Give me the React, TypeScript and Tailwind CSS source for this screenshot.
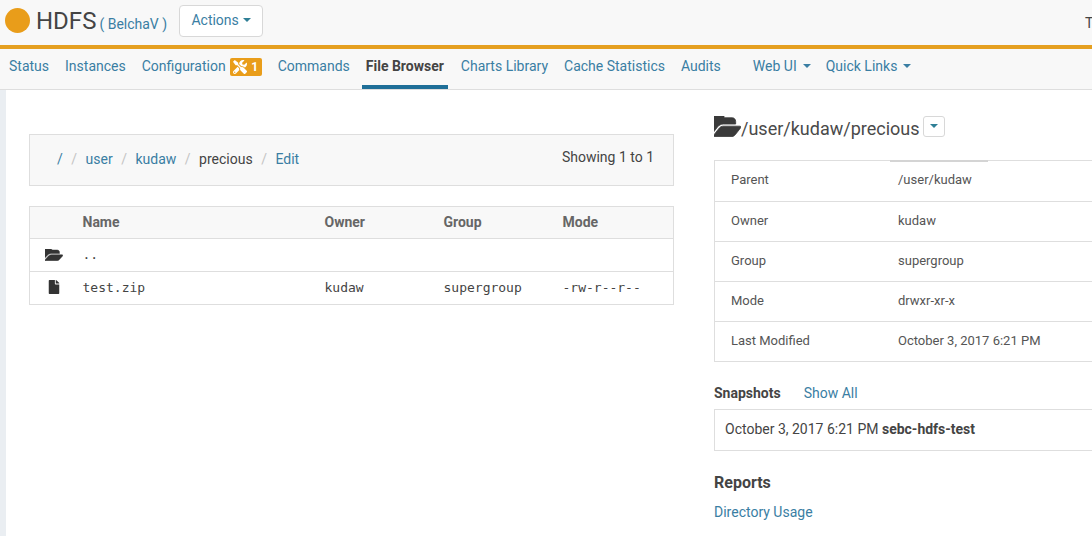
import React from "react";
import { FaFile, FaTools } from "react-icons/fa";

const linkClass = "text-[#3a7ea3]";

const tabs = ["Status", "Instances"];
const tabsAfter = ["Charts Library", "Cache Statistics", "Audits"];

const details = [
  ["Parent", "/user/kudaw"],
  ["Owner", "kudaw"],
  ["Group", "supergroup"],
  ["Mode", "drwxr-xr-x"],
  ["Last Modified", "October 3, 2017 6:21 PM"],
];

const Caret = ({ className = "" }: { className?: string }) => (
  <span className={`inline-block w-0 h-0 border-x-[4px] border-x-transparent border-t-[4px] ${className}`} />
);

const Crumb = () => <span className="text-[#c4c4c4] mx-[8.5px]">/</span>;

// solid open folder, the slanted gap is mostly closed by the stroke
const OpenFolder = ({ className = "" }: { className?: string }) => (
  <svg viewBox="0 256 1792 1280" preserveAspectRatio="none" className={className} fill="currentColor" stroke="currentColor" strokeWidth="50">
    <path d="M1781 931q0 35-35 73l-336 396q-43 51-120.5 86.5t-143.5 35.5h-1088q-34 0-60.5-13t-26.5-43q0-35 35-73l336-396q43-51 120.5-86.5t143.5-35.5h1088q34 0 60.5 13t26.5 43zm-343-344v160h-832q-94 0-197 47.5t-164 119.5l-337 396-5 6q0-4-.5-12.5t-.5-12.5v-960q0-92 66-158t158-66h320q92 0 158 66t66 158v32h544q92 0 158 66t66 158z" />
  </svg>
);

const App: React.FC = () => {
  return (
    <div className="w-[1092px] h-[536px] overflow-hidden bg-white text-[#444] text-[14px] font-['Roboto',sans-serif]">
      {/* top bar */}
      <header className="h-[49px] bg-[#f8f8f8] border-b-[4px] border-[#e5a021] flex items-start pl-[5px] relative">
        <span className="w-[25px] h-[25px] mt-[8px] rounded-full bg-[#e99d1a]" />
        <span className="ml-[6px] mt-[7px] text-[24px] leading-[28px] text-[#444]">HDFS</span>
        <span className={`ml-[3px] mt-[15px] text-[14px] leading-[18px] ${linkClass}`}>( BelchaV )</span>
        <button className="ml-[12px] mt-[5px] w-[84px] h-[32px] pb-[2px] bg-white border border-[#d8d8d8] rounded-[4px] flex items-center justify-center gap-[4px] text-[14px] text-[#3a7ea3]">
          Actions
          <Caret className="border-t-[#2f7f96]" />
        </button>
        <span className="absolute left-[1085px] top-[13px] text-[14px] text-[#444]">To</span>
      </header>

      {/* tabs */}
      <nav className="h-[41px] bg-[#f8f8f8] border-b border-[#dedede] flex items-start pl-[9px] text-[14px] leading-[34px]">
        {tabs.map((t) => (
          <a key={t} className={`${linkClass} mr-[16px]`}>{t}</a>
        ))}
        <a className={`${linkClass} flex items-center h-[34px]`}>
          Configuration
          <span className="ml-[4px] mt-[1px] w-[32px] h-[18px] rounded-[2px] bg-[#e99d1a] text-white flex items-center justify-center gap-[4px] text-[12px] leading-none font-bold">
            <FaTools className="w-[14px] h-[14px]" />1
          </span>
        </a>
        <a className={`${linkClass} ml-[16px] mr-[16px]`}>Commands</a>
        <a className="h-[40px] -ml-[4px] px-[4px] mr-[13px] font-bold text-[#444] border-b-[4px] border-[#1f6f98]">File Browser</a>
        {tabsAfter.map((t) => (
          <a key={t} className={`${linkClass} mr-[16px]`}>{t}</a>
        ))}
        <a className={`${linkClass} ml-[16px] flex items-center gap-[6px] h-[34px]`}>
          Web UI
          <Caret className="border-t-[#3a7ea3]" />
        </a>
        <a className={`${linkClass} ml-[15px] flex items-center gap-[6px] h-[34px]`}>
          Quick Links
          <Caret className="border-t-[#3a7ea3]" />
        </a>
      </nav>

      <div className="flex h-[446px]">
        <div className="w-[6px] bg-[#eaeef2] shrink-0" />

        {/* file list */}
        <main className="w-[645px] ml-[23px] pt-[44px] shrink-0">
          <div className="h-[52px] bg-[#f8f8f8] border border-[#dedede] flex items-start justify-between pl-[27px] pr-[19px] pt-[14px] leading-[20px]">
            <div>
              <a className={linkClass}>/</a>
              <Crumb />
              <a className={linkClass}>user</a>
              <Crumb />
              <a className={linkClass}>kudaw</a>
              <Crumb />
              <span>precious</span>
              <Crumb />
              <a className={linkClass}>Edit</a>
            </div>
            <span className="-mt-[2px]">Showing 1 to 1</span>
          </div>

          <table className="mt-[20px] w-full border border-[#dedede] border-collapse table-fixed">
            <thead>
              <tr className="h-[32px] bg-[#f8f8f8] text-left text-[#666] font-bold">
                <th className="w-[53px]" />
                <th className="w-[242px] pb-[1px]">Name</th>
                <th className="w-[119px] pb-[1px]">Owner</th>
                <th className="w-[119px] pb-[1px]">Group</th>
                <th className="pb-[1px]">Mode</th>
              </tr>
            </thead>
            <tbody className="font-['DejaVu_Sans_Mono',monospace] text-[13px] text-[#444]">
              <tr className="h-[33px] border-t border-[#dedede]">
                <td className="pl-[15px]"><OpenFolder className="w-[18px] h-[12px] text-[#333]" /></td>
                <td>..</td>
                <td />
                <td />
                <td />
              </tr>
              <tr className="h-[33px] border-t border-[#dedede]">
                <td className="pl-[18px]"><FaFile className="w-[12px] h-[14px] -mt-[2px] text-[#333]" /></td>
                <td>test.zip</td>
                <td>kudaw</td>
                <td>supergroup</td>
                <td>-rw-r--r--</td>
              </tr>
            </tbody>
          </table>
        </main>

        {/* details */}
        <aside className="w-[500px] ml-[40px] shrink-0 pt-[24px]">
          <div className="h-[30px] flex items-center">
            <OpenFolder className="w-[27px] h-[21px] -mt-[5px] text-[#3a3a3a] shrink-0" />
            <span className="text-[18px] leading-[28px] text-[#4a4a4a]">/user/kudaw/precious</span>
            <button className="ml-[3px] -mt-[6px] w-[22px] h-[21px] bg-white border border-[#d8d8d8] rounded-[3px] flex items-center justify-center">
              <Caret className="border-t-[#2f7f96]" />
            </button>
          </div>

          <div className="relative mt-[16px] border border-[#dedede] text-[13px]">
            <div className="absolute left-[175px] -top-[1px] w-[98px] h-[2px] bg-[#d4d4d4]" />
            {details.map(([label, value], i) => (
              <div key={label} className={`h-[40px] pb-[2px] flex items-center pl-[16px] ${i > 0 ? "border-t border-[#dedede]" : ""}`}>
                <span className="w-[167px] text-[#555]">{label}</span>
                <span className="text-[#555]">{value}</span>
              </div>
            ))}
          </div>

          <div className="mt-[21px] h-[20px] flex items-center">
            <span className="font-bold text-[#444]">Snapshots</span>
            <a className={`ml-[23px] ${linkClass}`}>Show All</a>
          </div>
          <div className="mt-[6px] h-[42px] pb-[2px] border border-[#dedede] flex items-center pl-[10px] text-[#444]">
            October 3, 2017 6:21 PM&nbsp;<span className="font-bold">sebc-hdfs-test</span>
          </div>

          <h3 className="mt-[21px] text-[16px] leading-[22px] font-bold text-[#444]">Reports</h3>
          <a className={`block mt-[8px] leading-[20px] ${linkClass}`}>Directory Usage</a>
        </aside>
      </div>
    </div>
  );
};

export default App;
